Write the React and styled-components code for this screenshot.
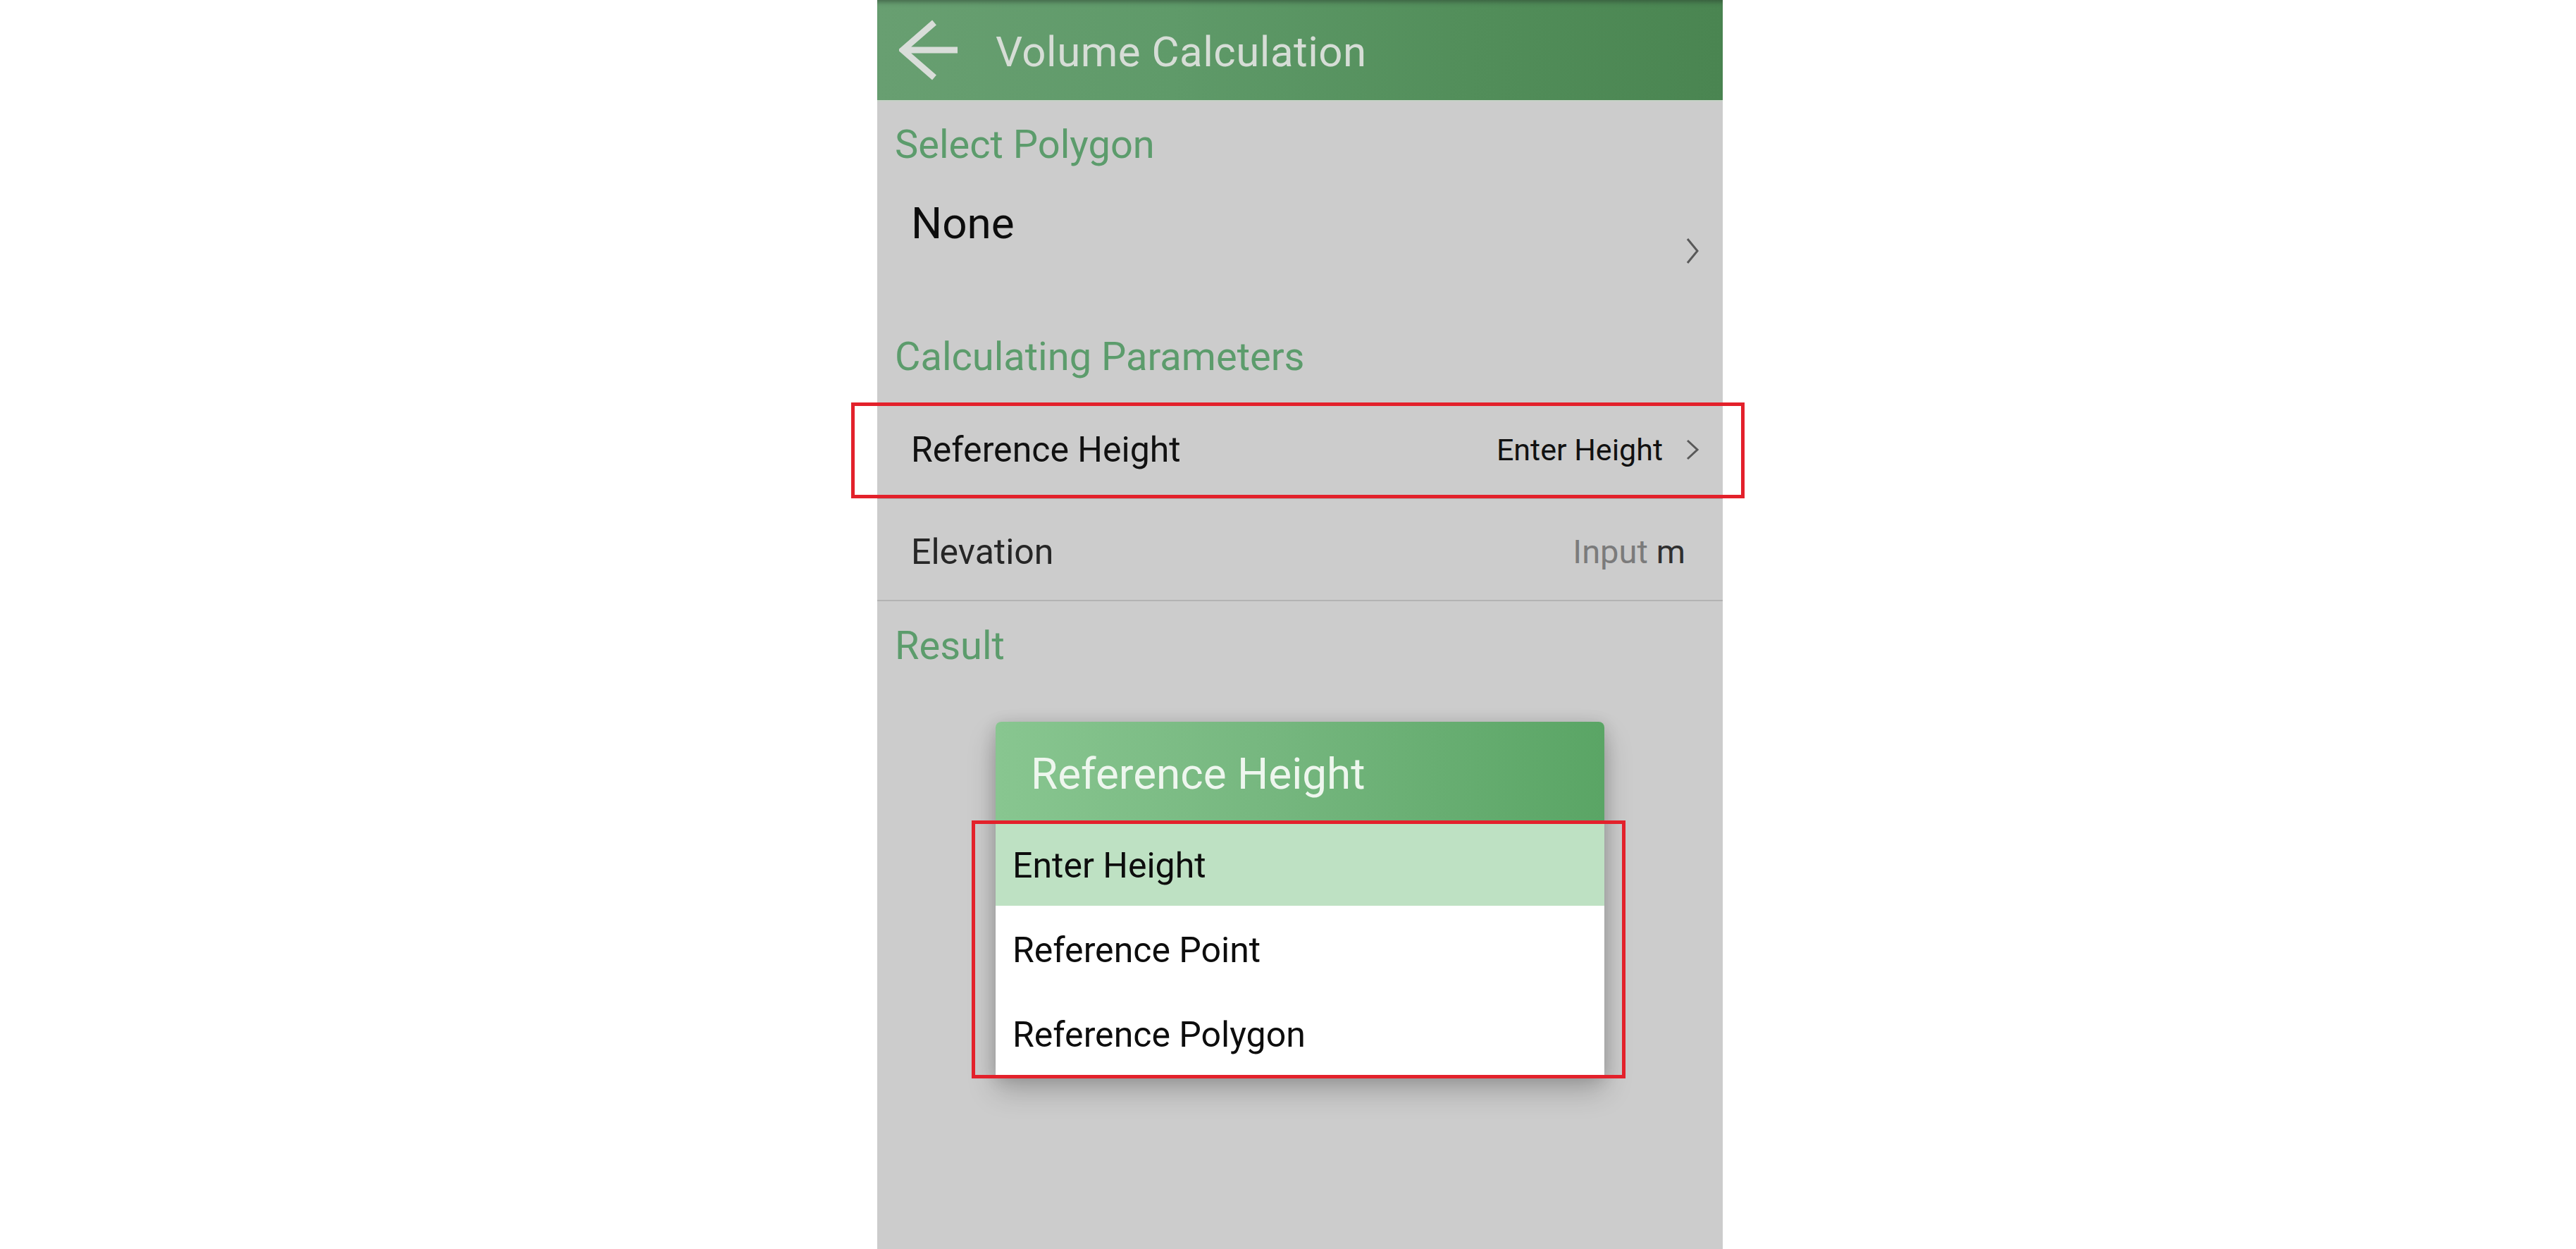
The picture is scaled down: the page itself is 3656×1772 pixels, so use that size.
import React from "react";
import styled, { createGlobalStyle } from "styled-components";

const Global = createGlobalStyle`
  html, body { margin: 0; padding: 0; background: #ffffff; }
  body { font-family: Roboto, "Liberation Sans", sans-serif; }
  * { box-sizing: border-box; }
`;

const Page = styled.div`
  display: flex;
  padding-left: 1245px;
  min-height: 1772px;
  background: #ffffff;
`;

const Phone = styled.div`
  position: relative;
  width: 1200px;
  min-height: 1772px;
  background: #cccccc;
  display: flex;
  flex-direction: column;
`;

const AppBar = styled.header`
  height: 144px;
  flex: none;
  display: flex;
  align-items: center;
  gap: 51px;
  padding-left: 31px;
  background: linear-gradient(90deg, #689f71 0%, #5f9a69 35%, #528e5a 70%, #4a8551 100%);
  box-shadow: inset 0 7px 6px -4px rgba(40, 60, 45, 0.55);
  border-bottom: 2px solid #c6d1c6;
`;

const Title = styled.h1`
  margin: 0;
  padding-top: 4px;
  font-size: 60px;
  font-weight: 400;
  color: #d6ddd6;
  letter-spacing: 0.5px;
`;

const SectionLabel = styled.div`
  padding: ${(p) => p.$top || 0}px 25px ${(p) => p.$bottom || 0}px;
  font-size: 56px;
  line-height: 56px;
  color: #5c9c6c;
`;

const PickRow = styled.div`
  height: 245px;
  display: flex;
  align-items: center;
  justify-content: space-between;
  padding: 0 33px 0 48px;
`;

const PickValue = styled.div`
  align-self: flex-start;
  margin-top: 53px;
  font-size: 62px;
  line-height: 62px;
  color: #0d0d0d;
`;

const Row = styled.div`
  position: relative;
  height: ${(p) => p.$h}px;
  display: flex;
  align-items: center;
  justify-content: space-between;
  padding: ${(p) => p.$shift || 0}px ${(p) => p.$right}px 0 48px;
  border-bottom: 2px solid #b3b3b3;
`;

const RowLabel = styled.span`
  font-size: 50px;
  color: ${(p) => p.$color || "#111"};
`;

const RowValue = styled.span`
  display: flex;
  align-items: center;
  gap: ${(p) => p.$gap || 32}px;
  font-size: ${(p) => p.$size || 43}px;
  color: #111;
`;

const Placeholder = styled.span`
  color: #7b7b7b;
`;

const Unit = styled.span`
  color: #2f2f2f;
`;

const Highlight = styled.div`
  position: absolute;
  top: ${(p) => p.$t}px;
  bottom: ${(p) => p.$b}px;
  left: ${(p) => p.$l}px;
  right: ${(p) => p.$r}px;
  border: 5px solid #e3212b;
  pointer-events: none;
`;

const Dialog = styled.div`
  position: absolute;
  top: 1024px;
  left: 168px;
  width: 864px;
  border-radius: 8px 8px 0 0;
  box-shadow: 0 22px 40px rgba(0, 0, 0, 0.22), 0 4px 22px rgba(0, 0, 0, 0.16);
  display: flex;
  flex-direction: column;
`;

const DialogHead = styled.div`
  height: 141px;
  display: flex;
  align-items: center;
  padding: 6px 0 0 50px;
  border-radius: 8px 8px 0 0;
  background: linear-gradient(90deg, #88c690 0%, #76b77f 45%, #5aa565 100%);
  font-size: 62px;
  color: #eef6ee;
`;

const OptionList = styled.div`
  position: relative;
  display: flex;
  flex-direction: column;
`;

const Option = styled.div`
  height: 120px;
  display: flex;
  align-items: center;
  padding: 6px 0 0 24px;
  font-size: 50px;
  color: #0d0d0d;
  background: ${(p) => (p.$active ? "#bee1c3" : "#ffffff")};
`;

const BackArrow = () => (
  <svg width="86" height="86" viewBox="0 0 86 86" aria-hidden="true">
    <path
      d="M50 4 L5 43 L50 82 M5 43 L83 43"
      fill="none"
      stroke="#d9ddd9"
      strokeWidth="9"
    />
  </svg>
);

const Chevron = ({ h = 32 }) => (
  <svg width="20" height={h} viewBox={`0 0 20 ${h}`} aria-hidden="true">
    <path
      d={`M3 2 L17 ${h / 2} L3 ${h - 2}`}
      fill="none"
      stroke="#595959"
      strokeWidth="3"
    />
  </svg>
);

export default function App() {
  return (
    <>
      <Global />
      <Page>
        <Phone>
          <AppBar>
            <BackArrow />
            <Title>Volume Calculation</Title>
          </AppBar>

          <SectionLabel $top={33}>Select Polygon</SectionLabel>
          <PickRow>
            <PickValue>None</PickValue>
            <Chevron h={38} />
          </PickRow>

          <SectionLabel $bottom={33}>Calculating Parameters</SectionLabel>
          <Row $h={141} $right={33} $shift={2}>
            <RowLabel>Reference Height</RowLabel>
            <RowValue>
              Enter Height
              <Chevron h={30} />
            </RowValue>
            <Highlight $t={4} $b={-1} $l={-37} $r={-31} />
          </Row>
          <Row $h={145} $right={53} $shift={6}>
            <RowLabel $color="#262626">Elevation</RowLabel>
            <RowValue $size={47} $gap={12}>
              <Placeholder>Input</Placeholder>
              <Unit>m</Unit>
            </RowValue>
          </Row>

          <SectionLabel $top={35}>Result</SectionLabel>

          <Dialog>
            <DialogHead>Reference Height</DialogHead>
            <OptionList>
              <Option $active>Enter Height</Option>
              <Option>Reference Point</Option>
              <Option>Reference Polygon</Option>
              <Highlight $t={-1} $b={-5} $l={-34} $r={-30} />
            </OptionList>
          </Dialog>
        </Phone>
      </Page>
    </>
  );
}
